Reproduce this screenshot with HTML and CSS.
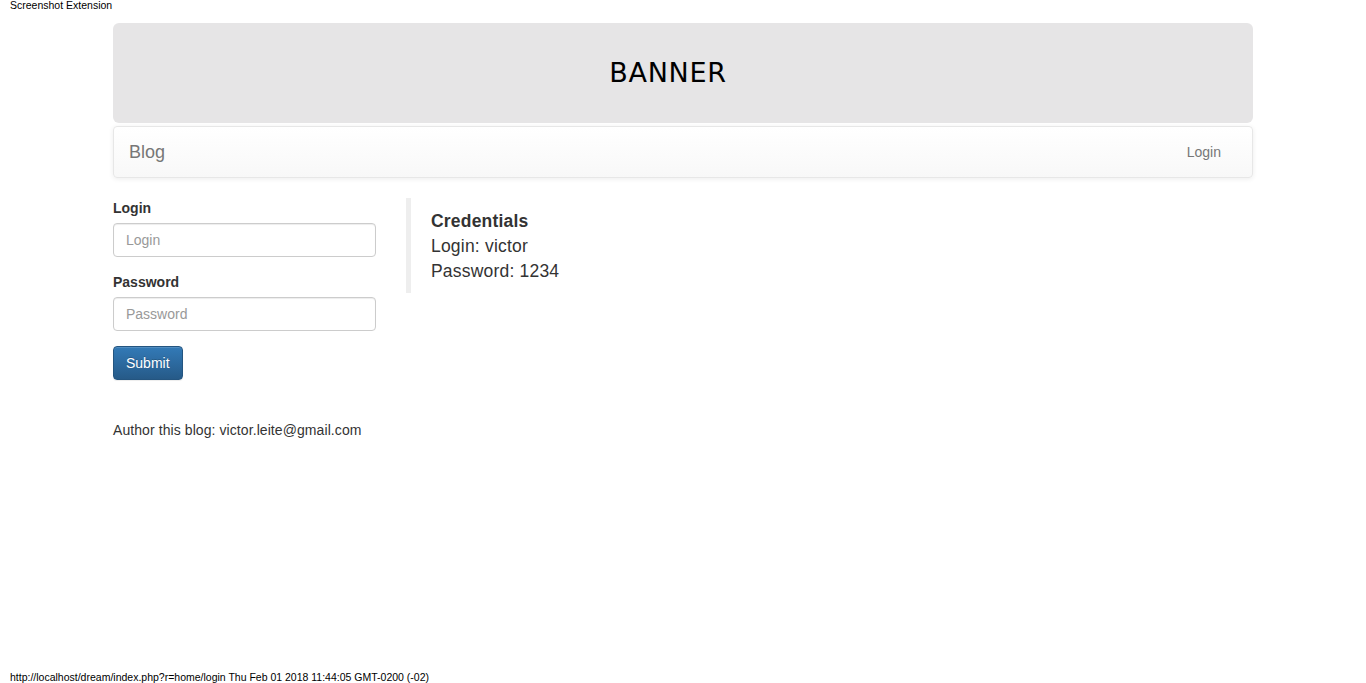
FILE: index.html
```html
<!DOCTYPE html>
<html>
<head>
<meta charset="utf-8">
<title>Blog</title>
<link rel="stylesheet" href="styles.css">
</head>
<body>
<div class="ext-top">Screenshot Extension</div>
<div class="container">
  <div class="banner">BANNER</div>
  <nav class="navbar">
    <a class="brand" href="#">Blog</a>
    <a class="nav-link" href="#">Login</a>
  </nav>
  <div class="row">
    <div class="col-form">
      <form class="login-form">
        <div class="form-group">
          <label class="label" for="login">Login</label>
          <input class="input" id="login" type="text" placeholder="Login">
        </div>
        <div class="form-group">
          <label class="label" for="password">Password</label>
          <input class="input" id="password" type="password" placeholder="Password">
        </div>
        <button class="btn" type="button">Submit</button>
      </form>
    </div>
    <div class="col-main">
      <blockquote class="quote">
        <div class="quote-title">Credentials</div>
        <div>Login: victor</div>
        <div>Password: 1234</div>
      </blockquote>
    </div>
  </div>
  <p class="author">Author this blog: victor.leite@gmail.com</p>
</div>
<div class="ext-bottom">http://localhost/dream/index.php?r=home/login Thu Feb 01 2018 11:44:05 GMT-0200 (-02)</div>
</body>
</html>
```
FILE: styles.css
```css
html, body {
  margin: 0;
  padding: 0;
}
body {
  font-family: "Liberation Sans", Arial, sans-serif;
  font-size: 14px;
  line-height: 1.42857;
  color: #333;
  background: #fff;
  min-height: 100vh;
  display: flex;
  flex-direction: column;
  box-sizing: border-box;
}
.ext-top {
  font-size: 10.5px;
  line-height: 10px;
  height: 10px;
  padding-left: 10px;
  color: #000;
}
.ext-bottom {
  margin-top: auto;
  font-size: 10.5px;
  line-height: 12px;
  padding: 0 0 0 10px;
  color: #000;
}
.container {
  width: 1140px;
  margin: 13px auto 0;
}
.banner {
  height: 100px;
  background: #e6e5e6;
  border-radius: 6px;
  display: flex;
  align-items: center;
  justify-content: center;
  padding-right: 30px;
  box-sizing: border-box;
  font-family: "DejaVu Sans", Verdana, sans-serif;
  font-size: 27px;
  letter-spacing: 0.7px;
  color: #000;
  margin-bottom: 3px;
}
.navbar {
  height: 50px;
  border: 1px solid #e7e7e7;
  border-radius: 4px;
  background: linear-gradient(to bottom, #fff 0%, #f8f8f8 100%);
  box-shadow: inset 0 1px 0 rgba(255,255,255,.15), 0 1px 5px rgba(0,0,0,.075);
  display: flex;
  align-items: center;
  justify-content: space-between;
  margin-bottom: 20px;
}
.brand {
  font-size: 18px;
  line-height: 20px;
  color: #777;
  text-decoration: none;
  padding: 15px 15px;
}
.nav-link {
  font-size: 14px;
  line-height: 20px;
  color: #777;
  text-decoration: none;
  padding: 15px 31px 15px 15px;
}
.row {
  display: flex;
}
.col-form {
  width: 263px;
  flex: none;
}
.col-main {
  flex: 1;
  padding-left: 30px;
}
.login-form {
  margin: 0;
}
.form-group {
  margin-bottom: 15px;
}
.label {
  display: block;
  font-weight: bold;
  margin-bottom: 5px;
  line-height: 20px;
}
.input {
  display: block;
  width: 100%;
  height: 34px;
  box-sizing: border-box;
  padding: 6px 12px;
  font-family: inherit;
  font-size: 14px;
  color: #555;
  background: #fff;
  border: 1px solid #ccc;
  border-radius: 4px;
  box-shadow: inset 0 1px 1px rgba(0,0,0,.075);
  margin: 0;
}
.input::placeholder {
  color: #999;
}
.btn {
  display: block;
  height: 34px;
  padding: 6px 12px;
  font-family: inherit;
  font-size: 14px;
  line-height: 20px;
  color: #fff;
  background: linear-gradient(to bottom, #337ab7 0%, #265a88 100%);
  border: 1px solid #245580;
  border-radius: 4px;
  box-shadow: inset 0 1px 0 rgba(255,255,255,.15), 0 1px 1px rgba(0,0,0,.075);
  text-shadow: 0 -1px 0 rgba(0,0,0,.2);
  margin: 0;
}
.quote {
  margin: 0;
  padding: 11px 20px 9px;
  border-left: 5px solid #eee;
  font-size: 17.5px;
  line-height: 25px;
  letter-spacing: 0.2px;
}
.quote-title {
  font-weight: bold;
}
.author {
  margin: 40px 0 0;
  line-height: 20px;
  letter-spacing: 0.08px;
}
```
